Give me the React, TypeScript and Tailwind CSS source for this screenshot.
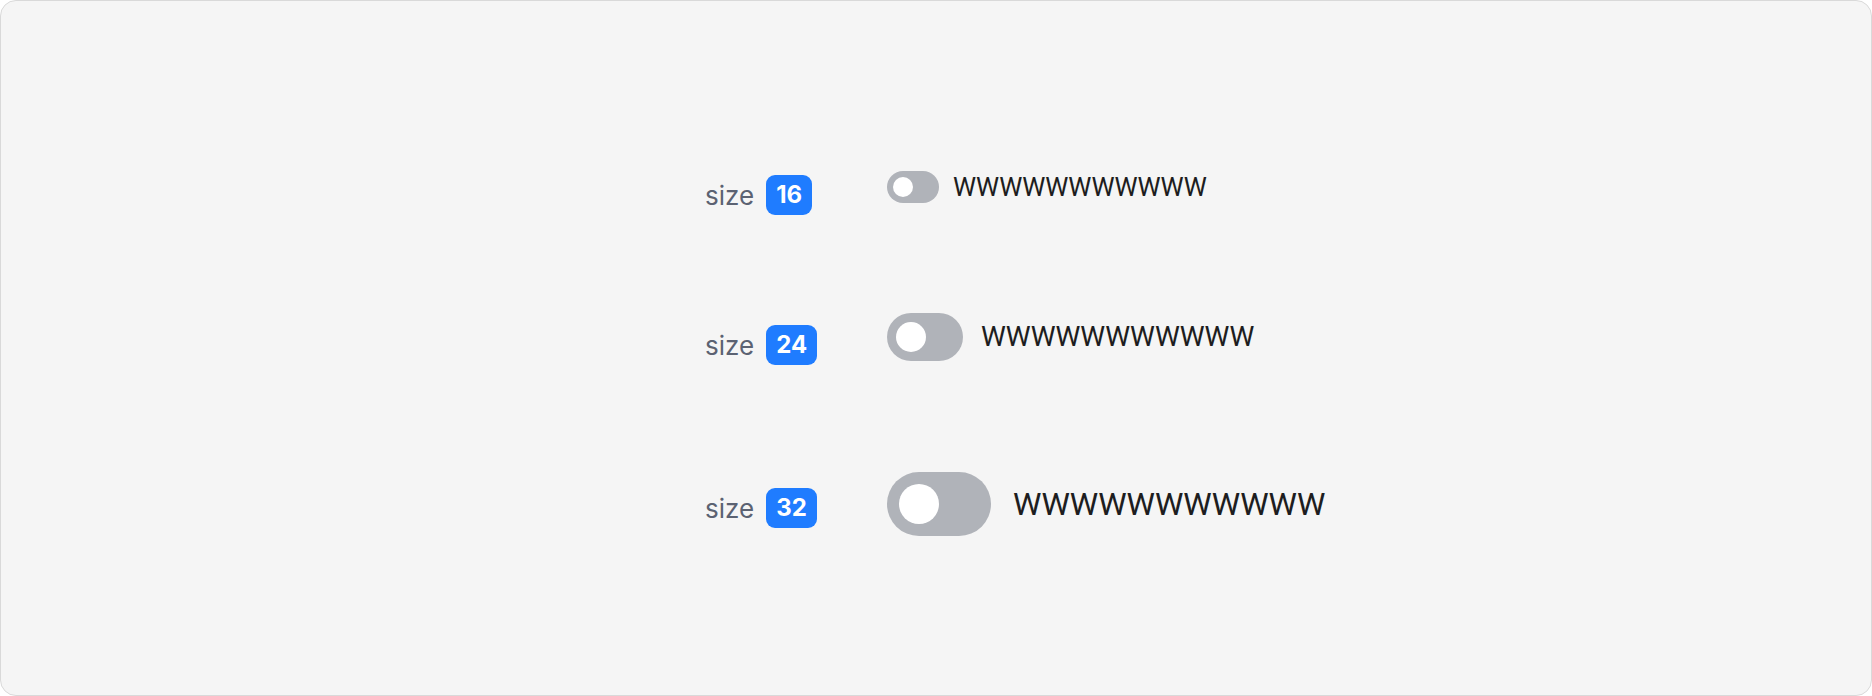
import React from 'react';

const rows = [
  { size: 16, trackW: 52, trackH: 32, knob: 20, text: 'text-[26px]', gap: 'gap-[14px]', mt: 'mt-[158px]', contentH: 'h-[56px]' },
  { size: 24, trackW: 76, trackH: 48, knob: 30, text: 'text-[28px]', gap: 'gap-[18px]', mt: 'mt-[78px]', contentH: 'h-[56px]' },
  { size: 32, trackW: 104, trackH: 64, knob: 40, text: 'text-[32px]', gap: 'gap-[22px]', mt: 'mt-[91px]', contentH: 'h-[64px]' },
];

function Toggle({ w, h, knob }: { w: number; h: number; knob: number }) {
  const pad = (h - knob) / 2;
  return (
    <button
      className="flex shrink-0 items-center rounded-full bg-[#b0b3b9]"
      style={{ width: w, height: h, paddingLeft: pad }}
    >
      <span className="block rounded-full bg-white" style={{ width: knob, height: knob }} />
    </button>
  );
}

export default function App() {
  return (
    <div className="h-[696px] w-[1872px] bg-white font-['Inter',sans-serif]">
      <div className="h-full w-full rounded-[16px] border border-[#d9d9d9] bg-[#f5f5f5] pl-[704px]">
        {rows.map((r) => (
          <div key={r.size} className={`flex items-start ${r.mt}`}>
            <div className="flex h-[72px] w-[182px] shrink-0 items-center">
              <span className="text-[26px] text-[#5b6272]">size</span>
              <span className="ml-[12px] flex h-[40px] items-center rounded-[9px] bg-[#1f7cff] px-[10px] text-[24px] font-bold text-white">
                {r.size}
              </span>
            </div>
            <div className={`flex items-center ${r.contentH} ${r.gap}`}>
              <Toggle w={r.trackW} h={r.trackH} knob={r.knob} />
              <span className={`${r.text} font-['Roboto',sans-serif] text-[#1d1d20]`}>WWWWWWWWWWW</span>
            </div>
          </div>
        ))}
      </div>
    </div>
  );
}
